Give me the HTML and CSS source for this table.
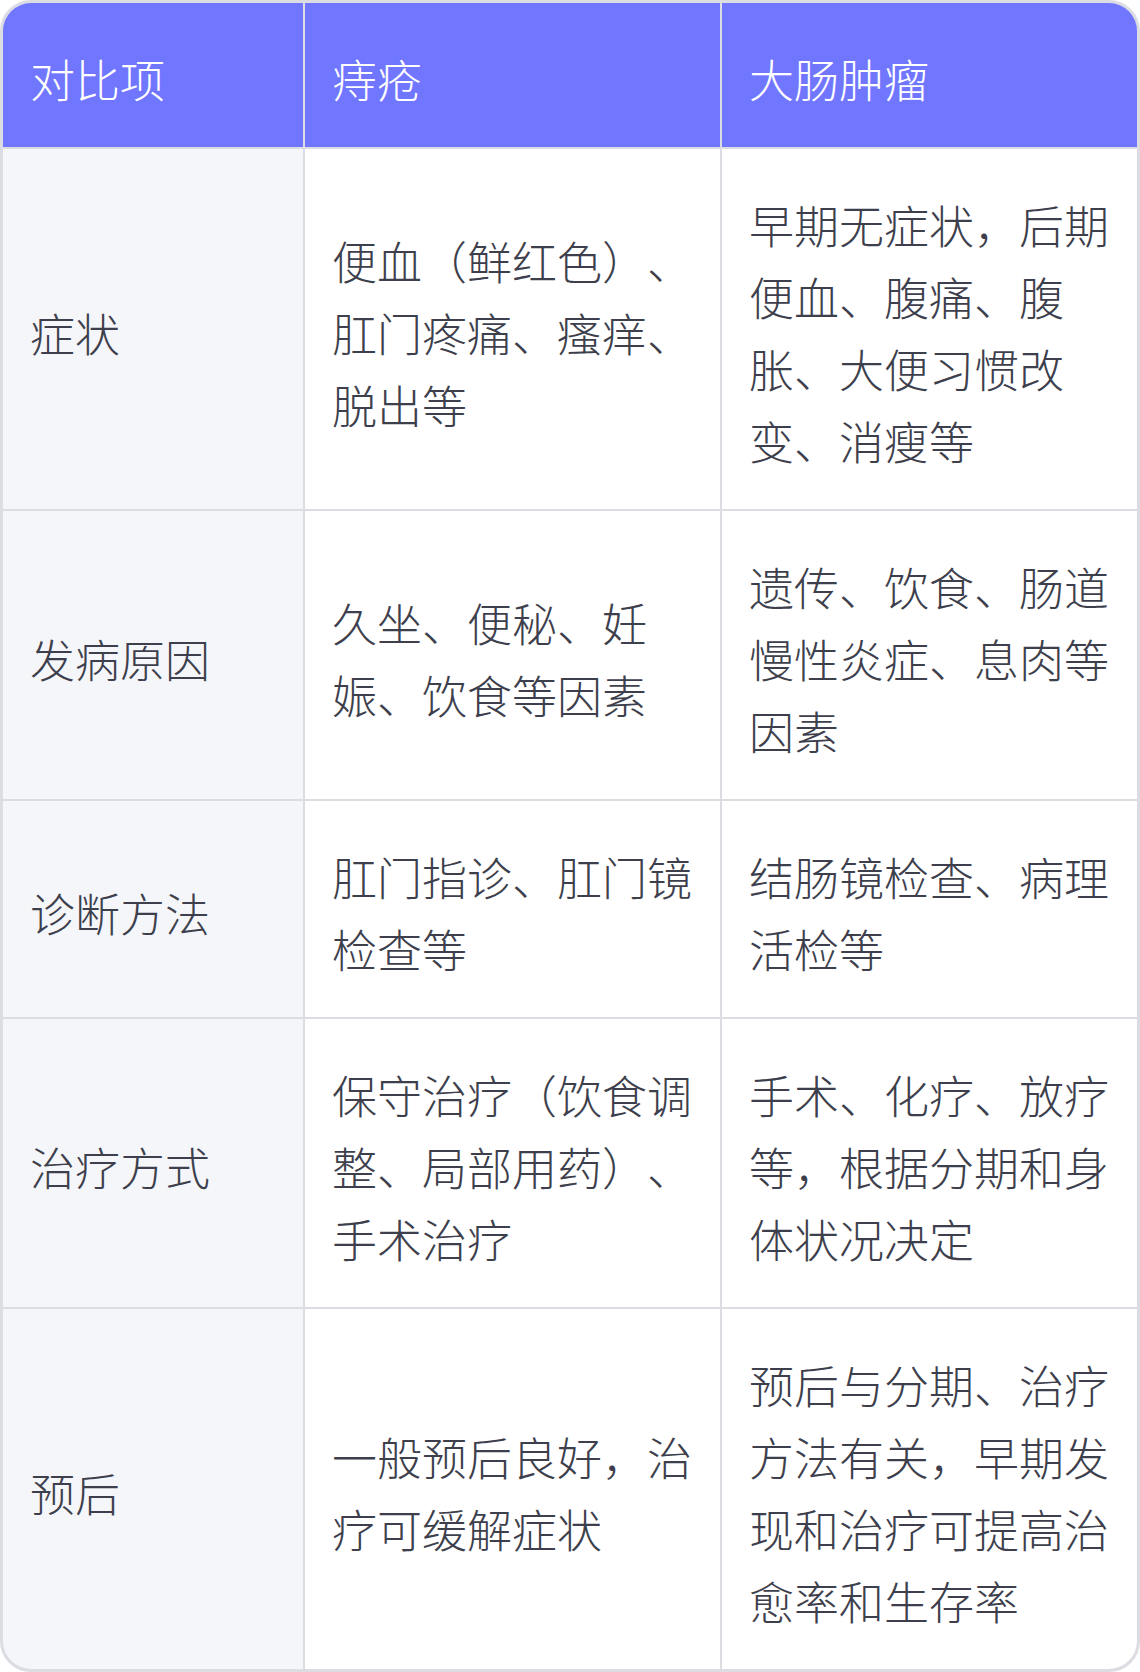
FILE: index.html
```html
<!DOCTYPE html>
<html lang="zh-CN">
<head>
<meta charset="utf-8">
<title>痔疮与大肠肿瘤对比</title>
<link rel="stylesheet" href="styles.css">
</head>
<body>
<div class="table">
  <div class="cell head">对比项</div>
  <div class="cell head">痔疮</div>
  <div class="cell head">大肠肿瘤</div>

  <div class="cell label">症状</div>
  <div class="cell">便血（鲜红色）、肛门疼痛、瘙痒、脱出等</div>
  <div class="cell">早期无症状，后期便血、腹痛、腹胀、大便习惯改变、消瘦等</div>

  <div class="cell label">发病原因</div>
  <div class="cell">久坐、便秘、妊娠、饮食等因素</div>
  <div class="cell">遗传、饮食、肠道慢性炎症、息肉等因素</div>

  <div class="cell label">诊断方法</div>
  <div class="cell">肛门指诊、肛门镜检查等</div>
  <div class="cell">结肠镜检查、病理活检等</div>

  <div class="cell label">治疗方式</div>
  <div class="cell">保守治疗（饮食调整、局部用药）、手术治疗</div>
  <div class="cell">手术、化疗、放疗等，根据分期和身体状况决定</div>

  <div class="cell label">预后</div>
  <div class="cell">一般预后良好，治疗可缓解症状</div>
  <div class="cell">预后与分期、治疗方法有关，早期发现和治疗可提高治愈率和生存率</div>
</div>
</body>
</html>
```
FILE: styles.css
```css
html, body {
  margin: 0;
  padding: 0;
  background: #ffffff;
}
.table {
  width: 1140px;
  box-sizing: border-box;
  display: grid;
  grid-template-columns: 300px 415px 415px;
  grid-template-rows: 144px 360px 288px 216px 288px 360px;
  gap: 2px;
  border: 3px solid #dcdde3;
  border-radius: 31px;
  background: #dcdde3;
  overflow: hidden;
  font-family: "Noto Sans CJK SC", "Noto Sans", sans-serif;
  font-size: 45px;
  font-weight: 300;
  line-height: 72px;
  color: #3d404c;
  text-spacing-trim: space-all;
}
.cell {
  display: flex;
  align-items: center;
  padding: 7px 27px 0;
  background: #ffffff;
}
.head {
  background: #7176ff;
  color: #ffffff;
}
.label {
  background: #f5f6fa;
}
```
